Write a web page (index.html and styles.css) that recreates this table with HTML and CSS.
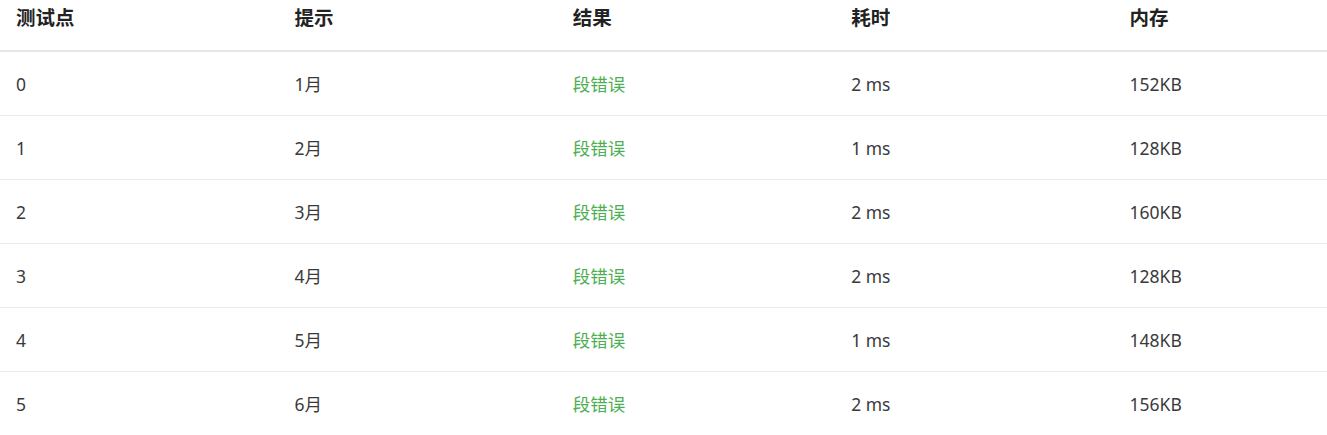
FILE: index.html
```html
<!DOCTYPE html>
<html lang="zh">
<head>
<meta charset="utf-8">
<link rel="stylesheet" href="styles.css">
</head>
<body>
<div class="table">
  <div class="row head">
    <div class="cell">测试点</div><div class="cell">提示</div><div class="cell">结果</div><div class="cell">耗时</div><div class="cell">内存</div>
  </div>
  <div class="row"><div class="cell">0</div><div class="cell">1月</div><div class="cell ok">段错误</div><div class="cell">2 ms</div><div class="cell">152KB</div></div>
  <div class="row"><div class="cell">1</div><div class="cell">2月</div><div class="cell ok">段错误</div><div class="cell">1 ms</div><div class="cell">128KB</div></div>
  <div class="row"><div class="cell">2</div><div class="cell">3月</div><div class="cell ok">段错误</div><div class="cell">2 ms</div><div class="cell">160KB</div></div>
  <div class="row"><div class="cell">3</div><div class="cell">4月</div><div class="cell ok">段错误</div><div class="cell">2 ms</div><div class="cell">128KB</div></div>
  <div class="row"><div class="cell">4</div><div class="cell">5月</div><div class="cell ok">段错误</div><div class="cell">1 ms</div><div class="cell">148KB</div></div>
  <div class="row"><div class="cell">5</div><div class="cell">6月</div><div class="cell ok">段错误</div><div class="cell">2 ms</div><div class="cell">156KB</div></div>
</div>
</body>
</html>
```
FILE: styles.css
```css
html, body {
  margin: 0;
  padding: 0;
  background: #fff;
  overflow: hidden;
}
.table {
  width: 1327px;
  overflow: hidden;
  font-family: "Noto Sans", "Noto Sans CJK SC", sans-serif;
  font-size: 17.5px;
  color: #3a3a3a;
}
.row {
  display: grid;
  grid-template-columns: repeat(5, 278.4px);
  height: 64px;
  border-bottom: 1px solid #ebebeb;
  box-sizing: border-box;
  align-items: center;
  padding-top: 1px;
}
.row.head {
  height: 52px;
  border-bottom: 2px solid #e6e6e6;
  align-items: start;
  padding-top: 4px;
  font-weight: 700;
  font-size: 19.5px;
  color: #222;
}
.cell {
  padding: 0 16px;
  line-height: 28px;
  white-space: nowrap;
}
.ok {
  color: #4caf50;
}
```
